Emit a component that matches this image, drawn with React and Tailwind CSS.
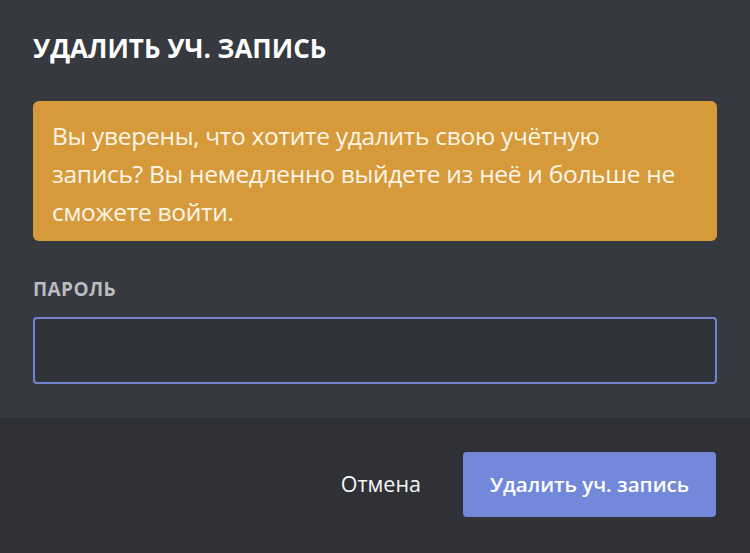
export default function App() {
  return (
    <div className="w-[750px] h-[553px] flex flex-col bg-[#36393f] font-['Open_Sans','Noto_Sans',sans-serif] overflow-hidden">
      <div className="flex-1 px-[33px] pt-[33px]">
        <h1 className="text-[26px] font-bold text-white leading-[30px]">
          УДАЛИТЬ УЧ. ЗАПИСЬ
        </h1>
        <div className="mt-[38px] h-[140px] rounded-[6px] bg-[#d69a3b] px-[19px] pt-[16px] text-[#fdf5e8] text-[24.5px] leading-[38px] tracking-[-0.3px]">
          Вы уверены, что хотите удалить свою учётную
          <br />
          запись? Вы немедленно выйдете из неё и больше не
          <br />
          сможете войти.
        </div>
        <label className="block mt-[38px]">
          <span className="block text-[19px] font-bold text-[#b9bbbe] tracking-[0.4px] leading-[20px]">
            ПАРОЛЬ
          </span>
          <input
            type="password"
            className="mt-[18px] block w-full h-[67px] rounded-[4px] border-2 border-[#7283cf] bg-[#303339] outline-none"
          />
        </label>
      </div>
      <footer className="h-[135px] bg-[#2f3136] flex items-center justify-end gap-[42px] pr-[34px] pb-[2px]">
        <button className="text-[21.5px] text-[#f6f6f7] font-medium">Отмена</button>
        <button className="w-[253px] h-[65px] rounded-[4px] bg-[#7289da] text-white text-[20.5px] font-semibold">
          Удалить уч. запись
        </button>
      </footer>
    </div>
  );
}
